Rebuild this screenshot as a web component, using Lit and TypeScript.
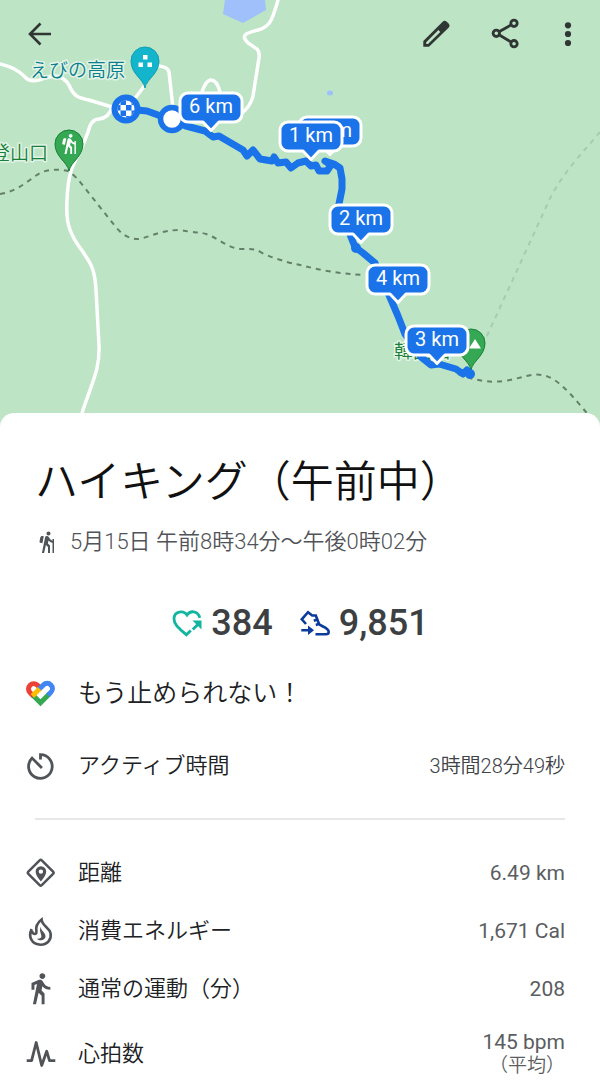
import { LitElement, html, svg, css } from "lit";
import { customElement, property } from "lit/decorators.js";

const HIKER =
  "M13.5 5.5c1.1 0 2-.9 2-2s-.9-2-2-2-2 .9-2 2 .9 2 2 2zM17.5 10.78c-1.23-.37-2.22-1.17-2.8-2.18l-1-1.6c-.41-.65-1.11-1-1.84-1-.78 0-1.59.5-1.78 1.44S7 23 7 23h2.1l1.8-8 2.1 2v6h2v-7.5l-2.1-2 .6-3c1 1.15 2.41 2.01 4 2.34V23H19V9h-1.5v1.78zM7.43 13.13l-2.12-.41c-.54-.11-.9-.63-.79-1.17l.76-3.93c.21-1.08 1.26-1.79 2.34-1.58l1.16.23-1.35 6.86z";

const ICONS: Record<string, unknown> = {
  back: svg`<path d="M27 16H6.500M16.500 5.500L6 16l10.500 10.500" fill="none" stroke="currentColor" stroke-width="2.600"/>`,
  edit: svg`<path fill="currentColor" fill-rule="evenodd" d="M3.300 23v5.700H9L28.800 9.400q1.700-1.900 0-3.600l-2.300-2.300q-1.900-1.700-3.600 0zM6.200 24.300L18.400 12l1.900 1.900L8 26H6.200z"/>`,
  share: svg`<g fill="none" stroke="currentColor" stroke-width="2.800"><circle cx="24" cy="5.300" r="3.200"/><circle cx="6.300" cy="15.300" r="3.200"/><circle cx="24" cy="25.700" r="3.200"/><path d="M9 13.800l12.300-7M9 16.800l12.300 7.300"/></g>`,
  more: svg`<g fill="currentColor"><circle cx="16" cy="7.300" r="3.100"/><circle cx="16" cy="16" r="3.100"/><circle cx="16" cy="25" r="3.100"/></g>`,
  points: svg`<g fill="none" stroke="#12b5a0" stroke-width="2.800"><path d="M28.800 10.800C27 3.500 19 3.200 16 8 12.500 3 3 4.200 3 12c0 5.500 5.500 9.500 12.300 15.800l4.500-4.300"/><path d="M21.800 22.500l5-5"/></g><path fill="#12b5a0" d="M21.500 13.500H30.500v9z"/>`,
  steps: svg`<g fill="none" stroke="#0b3b9c" stroke-width="2.600"><path d="M7 17L2.800 12.300 9 5.200l4.200 3.300h3.600l3.300 8.800c2.700 2.500 9.600 3.300 9.600 7.700 0 1.700-1 2.200-2.700 2.200H16.500"/><path d="M14.800 13.800l4.500-1.600M16.800 18l4-1.400M2.300 23.300h8"/></g><path fill="#0b3b9c" d="M9 18.600l6 4.700-6 4.700z"/>`,
  fit: svg`<g fill="none" stroke-width="5"><path stroke="#34a853" d="M7.600 17l7.900 7.800 9-9"/><path stroke="#ea4335" d="M8.400 17.900L4.900 14.400a5.200 5.200 0 0 1 7.400-7.300l3.400 3.400"/><path stroke="#4285f4" d="M13.500 11.800l5-4.900a5.200 5.200 0 0 1 7.400 7.400l-3 3"/><path stroke="#fbbc04" d="M7.400 18l7.200-7.200"/></g>`,
  timer: svg`<g fill="none" stroke="currentColor" stroke-width="2.800"><path d="M15.500 9.500V4.700a11.800 11.800 0 1 1-8.400 3.400l9.800 9.800"/></g>`,
  distance: svg`<rect x="6.200" y="6.200" width="19" height="19" rx="1.500" transform="rotate(45 15.700 15.700)" fill="none" stroke="currentColor" stroke-width="2.500"/><path fill="currentColor" fill-rule="evenodd" d="M15.900 24.600c-3.200-4-5.300-6.900-5.300-10a5.300 5.300 0 0 1 10.600 0c0 3.100-2.100 6-5.300 10zm0-7.800a2.200 2.200 0 1 0 0-4.400 2.200 2.200 0 0 0 0 4.400z"/>`,
  flame: svg`<g fill="none" stroke="currentColor" stroke-width="2.600"><path d="M6.600 14C3 21.500 6.500 29.700 15.800 29.700c7 0 11-5.700 9.700-11.700C24.300 12.300 17 11 16.600 4.500 12 8 10.500 12 11.400 16.500c.6 3.500-4 3.500-4.500-.8"/></g><path fill="currentColor" d="M16 11.500c-1 4.300 4.700 5.500 4.500 10-.2 3.700-5.300 5.200-8.600 2.300 3 .3 4.600-.7 4.500-2.700-.1-2.500-2.700-5.600-.4-9.600z"/>`,
  walk: svg`<path fill="currentColor" transform="translate(-2.200 -2) scale(1.450)" d="M13.500 5.500c1.100 0 2-.9 2-2s-.9-2-2-2-2 .9-2 2 .9 2 2 2zM9.800 8.900L7 23h2.100l1.800-8 2.100 2v6h2v-7.500l-2.100-2 .6-3C14.800 12 16.800 13 19 13v-2c-1.900 0-3.500-1-4.300-2.400l-1-1.600c-.4-.6-1-1-1.700-1-.3 0-.5.1-.8.1L6 8.300V13h2V9.600l1.800-.7"/>`,
  pulse: svg`<path d="M1.700 22.700h4.900L11.200 4.500l5.500 23 5-14.300 2.800 9.500h5.800" fill="none" stroke="currentColor" stroke-width="2.800" stroke-linejoin="round"/>`,
};

const icon = (name: string) =>
  html`<svg class="icon" viewBox="0 0 32 32" aria-hidden="true">${ICONS[name]}</svg>`;

@customElement("trail-map")
class TrailMap extends LitElement {
  static styles = css`
    :host {
      display: block;
      background: #bce4c5;
    }
    .map {
      display: block;
      width: 100%;
      height: auto;
    }
    .road {
      fill: none;
      stroke: #fff;
      stroke-width: 3.5;
      stroke-linecap: round;
    }
    .trail {
      fill: none;
      stroke: #64806a;
      stroke-width: 2;
      stroke-dasharray: 5 5;
    }
    .faint {
      stroke: #a6ccaf;
    }
    .route {
      fill: none;
      stroke: #1a73e8;
      stroke-width: 7;
      stroke-linejoin: round;
      stroke-linecap: round;
    }
    .place {
      font: 350 19px "Noto Sans CJK JP", sans-serif;
      fill: #188038;
      stroke: #e3f4e7;
      stroke-width: 3;
      stroke-linejoin: round;
      paint-order: stroke;
    }
    .sight {
      fill: #0b7f8d;
    }
    .flag {
      fill: #1a73e8;
      stroke: #fff;
      stroke-width: 3;
      stroke-linejoin: round;
    }
    .km {
      font: 400 20px Roboto, sans-serif;
      fill: #fff;
      text-anchor: middle;
    }
  `;

  private flag(x: number, y: number, label: string) {
    return svg`<g transform="translate(${x} ${y})">
      <path class="flag" d="M-23-38H23a8 8 0 0 1 8 8v13a8 8 0 0 1-8 8H8L0-.5-8-9H-23a8 8 0 0 1-8-8v-13a8 8 0 0 1 8-8z"/>
      <text class="km" x="0" y="-18">${label}</text>
    </g>`;
  }

  private pin(x: number, y: number, fill: string, edge: string) {
    return svg`<path transform="translate(${x} ${y})" fill=${fill} stroke=${edge}
      d="M0 0C-1.500-9-14-14-14-27a14 14 0 0 1 28 0C14-14 1.500-9 0 0z"/>`;
  }

  render() {
    return html`<svg class="map" viewBox="0 0 600 427" role="img" aria-label="ルート">
      <defs><clipPath id="finish"><circle cx="126" cy="109" r="8.500"/></clipPath></defs>
      <path fill="#9fc0fb" d="M225 0l-2 14 20 9 23-13-1-10z"/>
      <ellipse cx="330" cy="93" rx="3" ry="2.500" fill="#9fc0fb"/>
      <path class="road" d="M278 0C272 22 269 27 258 30c-12 3-18 5-10 13l9 6q3 3 2 9l-6 38q-2 10-13 19"/>
      <path class="road" d="M0 64c12 3 18 6 25 13q6 7 20 1 16-6 24 7c5 12 10 13 20 15l23 7q-3 11-13 12-8 0-11 13-4 11-8 20C72 165 68 175 67 200c-1 20 1 30 11 45 14 19 17 25 18 45l3 55c1 25-7 37-17 68l-5 14"/>
      <path class="road" d="M136 97l9-12M159 66q9 1 10 6l4 36M202 92q4-12 9-12 6 0 9 12"/>
      <path class="trail" d="M0 194c20-3 30-16 42-22q13-4 26-1 8 5 16 16l31 39q10 13 23 13c10-1 22-9 42-9 15 3 20 2 26 4 12 4 22 14 34 15 10 0 15-1 22 4 18 8 33 11 38 12 20 5 40 9 65 10"/>
      <path class="trail" d="M458 374q26 10 45 7c17-2 27-8 39-6 18 3 33 25 45 38l8 10"/>
      <path class="trail faint" d="M600 132c-15 18-40 43-53 73L486 338"/>
      <text class="place sight" x="30" y="77">えびの高原</text>
      <text class="place" x="-9" y="160">登山口</text>
      <text class="place" x="394" y="358">韓国岳</text>

      ${this.pin(145, 88, "#12b5cb", "#129eaf")}
      <path fill="#fff" d="M143 55h4.500v4.500H143zM138.500 62.500h4.500V67h-4.500zM147.500 62.500h4.500V67h-4.500z"/>
      ${this.pin(69, 171, "#34a853", "#188038")}
      <path fill="#fff" transform="translate(58 132.500) scale(.940)" d=${HIKER}/>
      ${this.pin(471, 370, "#34a853", "#188038")}
      <path fill="#fff" d="M475 339l6 9.500h-12z"/>

      <path class="route" d="M126 109l21 2 11 4M172 119l14 7 19 5 8 6 6-1 24 14 4 6 6-6 7 9 12 2 2-4 4 6 8-1 5 6 7-5 8-2 5 5 5-1 3 6h8l4-6-6-4 9 3 6 4 2 11v10l-3 15 12 33 4 10 8 6 12 10 14 32 9 21 7 18 16 23 10 8 8-1 17 5 7 5 4-4"/>
      <circle cx="356" cy="248" r="5" fill="#1a73e8"/>
      <circle cx="470" cy="374" r="5" fill="#1a73e8"/>
      <circle cx="126" cy="109" r="14.500" fill="#1a73e8"/>
      <g clip-path="url(#finish)">
        <rect x="116" y="99" width="20" height="20" fill="#fff"/>
        <path fill="#1a73e8" d="M120.500 99.500h5.500v5.500h-5.500zM131.500 99.500h5.500v5.500h-5.500zM126 105h5.500v5.500H126zM115 105h5.500v5.500H115zM120.500 110.500h5.500v5.500h-5.500zM131.500 110.500h5.500v5.500h-5.500zM126 116h5.500v5.500H126z"/>
      </g>
      <circle cx="172" cy="119" r="11.500" fill="#fff" stroke="#1a73e8" stroke-width="5.500"/>
      ${this.flag(211, 131, "6 km")} ${this.flag(330, 155, "5 km")}
      ${this.flag(311, 160, "1 km")} ${this.flag(361, 243, "2 km")}
      ${this.flag(398, 303, "4 km")} ${this.flag(437, 364, "3 km")}
    </svg>`;
  }
}

@customElement("metric-row")
class MetricRow extends LitElement {
  @property() icon = "";
  @property() label = "";
  @property() value = "";
  @property() note = "";
  @property({ type: Boolean, reflect: true }) long = false;

  static styles = css`
    :host {
      display: block;
    }
    .row {
      display: flex;
      align-items: center;
      padding: 13px 35px 13px 25px;
      color: #505357;
    }
    .icon {
      flex: none;
      width: 32px;
      height: 32px;
    }
    .label {
      flex: 1;
      margin-left: 21px;
      font: 350 22px/32px Roboto, "Noto Sans CJK JP", sans-serif;
      color: #202124;
    }
    .value {
      font: 400 21px/23px Roboto, "Noto Sans CJK JP", sans-serif;
      color: #5a5d61;
      text-align: right;
    }
    :host([long]) .value {
      font-size: 20px;
      font-weight: 350;
      color: #404347;
    }
    .note {
      display: block;
      font-size: 19px;
      font-weight: 350;
    }
  `;

  render() {
    return html`<div class="row">
      ${icon(this.icon)}
      <span class="label">${this.label}</span>
      <span class="value">${this.value}${this.note ? html`<span class="note">${this.note}</span>` : ""}</span>
    </div>`;
  }
}

@customElement("app-root")
class AppRoot extends LitElement {
  static styles = css`
    :host {
      display: block;
      min-height: 100vh;
      background: #fff;
      font-family: Roboto, "Noto Sans CJK JP", sans-serif;
      color: #202124;
    }
    .hero {
      position: relative;
    }
    .toolbar {
      position: absolute;
      inset: 0 0 auto 0;
      display: flex;
      align-items: center;
      gap: 22px;
      padding: 10px 16px;
    }
    .tool {
      display: grid;
      place-items: center;
      width: 48px;
      height: 48px;
      padding: 0;
      border: 0;
      background: none;
      color: #303633;
      cursor: pointer;
    }
    .first {
      margin-right: auto;
    }
    .slim {
      width: 32px;
    }
    .icon {
      flex: none;
      width: 32px;
      height: 32px;
    }
    .sheet {
      position: relative;
      margin-top: -14px;
      padding-top: 37px;
      border-radius: 14px 14px 0 0;
      background: #fff;
    }
    .title {
      margin: 0;
      padding: 0 35px;
      font-size: 43px;
      line-height: 64px;
      font-weight: 350;
      color: #111;
    }
    .when {
      display: flex;
      align-items: center;
      gap: 11px;
      margin: 0;
      padding: 12px 35px;
      font-size: 22px;
      line-height: 32px;
      font-weight: 350;
      color: #505357;
    }
    .small {
      width: 24px;
      height: 24px;
    }
    .stats {
      display: flex;
      justify-content: center;
      gap: 26px;
      padding: 33px 0 22px;
    }
    .stat {
      display: flex;
      align-items: center;
      gap: 8px;
      font-size: 36px;
      line-height: 40px;
      font-weight: 500;
      color: #3c4043;
    }
    .cheer {
      display: flex;
      align-items: center;
      gap: 21px;
      padding: 13px 25px 27px;
      font-size: 25px;
      line-height: 32px;
      font-weight: 350;
    }
    .rule {
      height: 2px;
      margin: 23px 35px 24px;
      border: 0;
      background: #e6e7e9;
    }
  `;

  render() {
    return html`
      <header class="hero">
        <trail-map></trail-map>
        <nav class="toolbar">
          <button class="tool first" aria-label="戻る">${icon("back")}</button>
          <button class="tool" aria-label="編集">${icon("edit")}</button>
          <button class="tool" aria-label="共有">${icon("share")}</button>
          <button class="tool slim" aria-label="その他">${icon("more")}</button>
        </nav>
      </header>
      <main class="sheet">
        <h1 class="title">ハイキング（午前中）</h1>
        <p class="when">
          <svg class="small" viewBox="0 0 24 24" aria-hidden="true"><path fill="currentColor" d=${HIKER} /></svg>
          5月15日 午前8時34分〜午後0時02分
        </p>
        <div class="stats">
          <span class="stat">${icon("points")}384</span>
          <span class="stat">${icon("steps")}9,851</span>
        </div>
        <div class="cheer">${icon("fit")}もう止められない！</div>
        <metric-row long icon="timer" label="アクティブ時間" value="3時間28分49秒"></metric-row>
        <hr class="rule" />
        <metric-row icon="distance" label="距離" value="6.49 km"></metric-row>
        <metric-row icon="flame" label="消費エネルギー" value="1,671 Cal"></metric-row>
        <metric-row icon="walk" label="通常の運動（分）" value="208"></metric-row>
        <metric-row icon="pulse" label="心拍数" value="145 bpm" note="（平均）"></metric-row>
      </main>
    `;
  }
}
